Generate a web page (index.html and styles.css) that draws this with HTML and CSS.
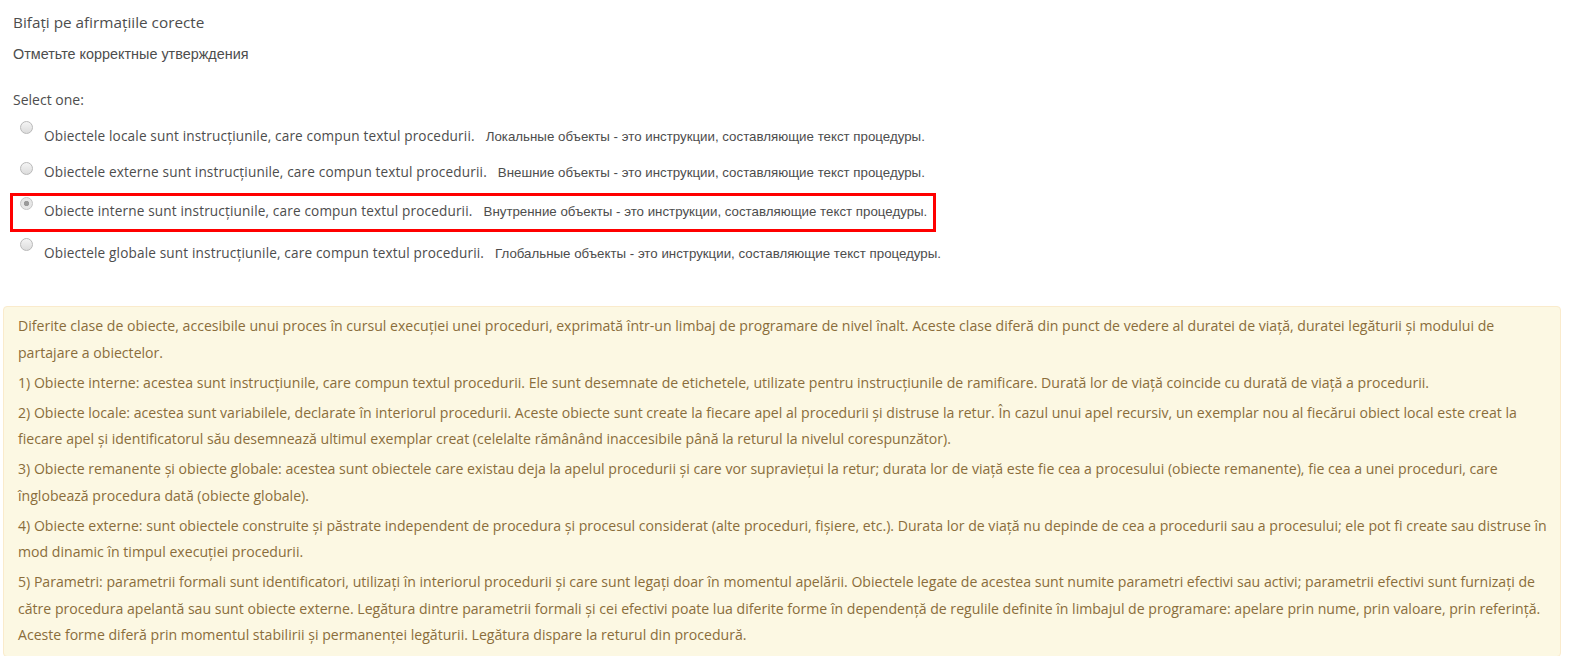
FILE: index.html
```html
<!DOCTYPE html>
<html lang="ro">
<head>
<meta charset="utf-8">
<title>Quiz</title>
<link rel="stylesheet" href="styles.css">
</head>
<body>
<div class="que">
  <div class="qtext">
    <p class="qline q1">Bifați pe afirmațiile corecte</p>
    <p class="qline q2 ru">Отметьте корректные утверждения</p>
  </div>
  <div class="ablock">
    <div class="prompt">Select one:</div>
    <div class="answer">
      <div class="opt o1">
        <span class="radio"></span>
        <span class="label">Obiectele locale sunt instrucțiunile, care compun textul procedurii.<span class="ru sep">Локальные объекты - это инструкции, составляющие текст процедуры.</span></span>
      </div>
      <div class="opt o2">
        <span class="radio"></span>
        <span class="label">Obiectele externe sunt instrucțiunile, care compun textul procedurii.<span class="ru sep">Внешние объекты - это инструкции, составляющие текст процедуры.</span></span>
      </div>
      <div class="opt o3 marked">
        <span class="radio checked"></span>
        <span class="label">Obiecte interne sunt instrucţiunile, care compun textul procedurii.<span class="ru sep">Внутренние объекты - это инструкции, составляющие текст процедуры.</span></span>
      </div>
      <div class="opt o4">
        <span class="radio"></span>
        <span class="label">Obiectele globale sunt instrucțiunile, care compun textul procedurii.<span class="ru sep">Глобальные объекты - это инструкции, составляющие текст процедуры.</span></span>
      </div>
    </div>
  </div>
</div>
<div class="feedback">
  <p>Diferite clase de obiecte, accesibile unui proces în cursul execuţiei unei proceduri, exprimată într-un limbaj de programare de nivel înalt. Aceste clase diferă din punct de vedere al duratei de viaţă, duratei legăturii şi modului de partajare a obiectelor.</p>
  <p>1) Obiecte interne: acestea sunt instrucţiunile, care compun textul procedurii. Ele sunt desemnate de etichetele, utilizate pentru instrucţiunile de ramificare. Durată lor de viaţă coincide cu durată de viaţă a procedurii.</p>
  <p>2) Obiecte locale: acestea sunt variabilele, declarate în interiorul procedurii. Aceste obiecte sunt create la fiecare apel al procedurii şi distruse la retur. În cazul unui apel recursiv, un exemplar nou al fiecărui obiect local este creat la fiecare apel şi identificatorul său desemnează ultimul exemplar creat (celelalte rămânând inaccesibile până la returul la nivelul corespunzător).</p>
  <p>3) Obiecte remanente şi obiecte globale: acestea sunt obiectele care existau deja la apelul procedurii şi care vor supravieţui la retur; durata lor de viaţă este fie cea a procesului (obiecte remanente), fie cea a unei proceduri, care înglobează procedura dată (obiecte globale).</p>
  <p>4) Obiecte externe: sunt obiectele construite şi păstrate independent de procedura şi procesul considerat (alte proceduri, fişiere, etc.). Durata lor de viaţă nu depinde de cea a procedurii sau a procesului; ele pot fi create sau distruse în mod dinamic în timpul execuţiei procedurii.</p>
  <p>5) Parametri: parametrii formali sunt identificatori, utilizaţi în interiorul procedurii şi care sunt legaţi doar în momentul apelării. Obiectele legate de acestea sunt numite parametri efectivi sau activi; parametrii efectivi sunt furnizaţi de către procedura apelantă sau sunt obiecte externe. Legătura dintre parametrii formali şi cei efectivi poate lua diferite forme în dependenţă de regulile definite în limbajul de programare: apelare prin nume, prin valoare, prin referinţă. Aceste forme diferă prin momentul stabilirii şi permanenţei legăturii. Legătura dispare la returul din procedură.</p>
</div>
</body>
</html>
```

FILE: styles.css
```css
html, body {
  margin: 0;
  padding: 0;
  background: #ffffff;
}
body {
  padding: 0 10px 0 3px;
  font-family: "Open Sans", "Noto Sans", "Liberation Sans", sans-serif;
  font-size: 14px;
  color: #4d4d4d;
}
.que {
  padding-left: 10px;
}
.qline {
  margin: 0;
  line-height: 20px;
}
.q1 {
  padding-top: 12px;
  font-size: 15.3px;
}
.q2 {
  margin-top: 12px;
}
.ru {
  font-family: "Liberation Sans", Arial, sans-serif;
}
.q2.ru {
  font-size: 14.4px;
}
.prompt {
  margin-top: 26px;
  line-height: 20px;
  font-size: 14px;
}
.answer {
  margin-top: 8px;
}
.opt {
  display: flex;
  align-items: flex-start;
  height: 36px;
  box-sizing: border-box;
  padding-left: 7px;
}
.radio {
  flex: none;
  width: 13px;
  height: 13px;
  box-sizing: border-box;
  border-radius: 50%;
  border: 1px solid #b9b9b9;
  background: linear-gradient(#f4f4f4, #dcdcdc);
  margin-top: 3px;
}
.radio.checked {
  border-color: #c4c4c4;
  background: radial-gradient(circle, #9a9a9a 0 2.3px, #e6e6e6 3px);
}
.label {
  margin-left: 11px;
  padding-top: 8px;
  line-height: 20px;
  font-size: 13.6px;
  letter-spacing: 0.15px;
  white-space: nowrap;
}
.label .ru {
  font-size: 13.3px;
  letter-spacing: 0;
}
.sep {
  margin-left: 11px;
}
.o2 .radio {
  margin-top: 8px;
}
.o2 .label {
  padding-top: 8px;
}
.marked {
  margin-top: 3px;
  margin-left: -3px;
  padding-left: 7px;
  width: 926px;
  height: 39px;
  border: 3px solid #ff0000;
}
.marked .radio {
  margin-top: 1px;
}
.marked .label {
  padding-top: 5px;
}
.o4 {
  margin-top: 3px;
}
.o4 .radio {
  margin-top: 3px;
}
.o4 .label {
  padding-top: 8px;
}
.feedback {
  margin-top: 35px;
  border: 1px solid #faebcc;
  border-radius: 4px;
  background: #fcf8e3;
  color: #8a6d3b;
  padding: 6px 9px 4px 14px;
  font-size: 14.1px;
  line-height: 26.5px;
}
.feedback p {
  margin: 0 0 3.5px 0;
}
```
